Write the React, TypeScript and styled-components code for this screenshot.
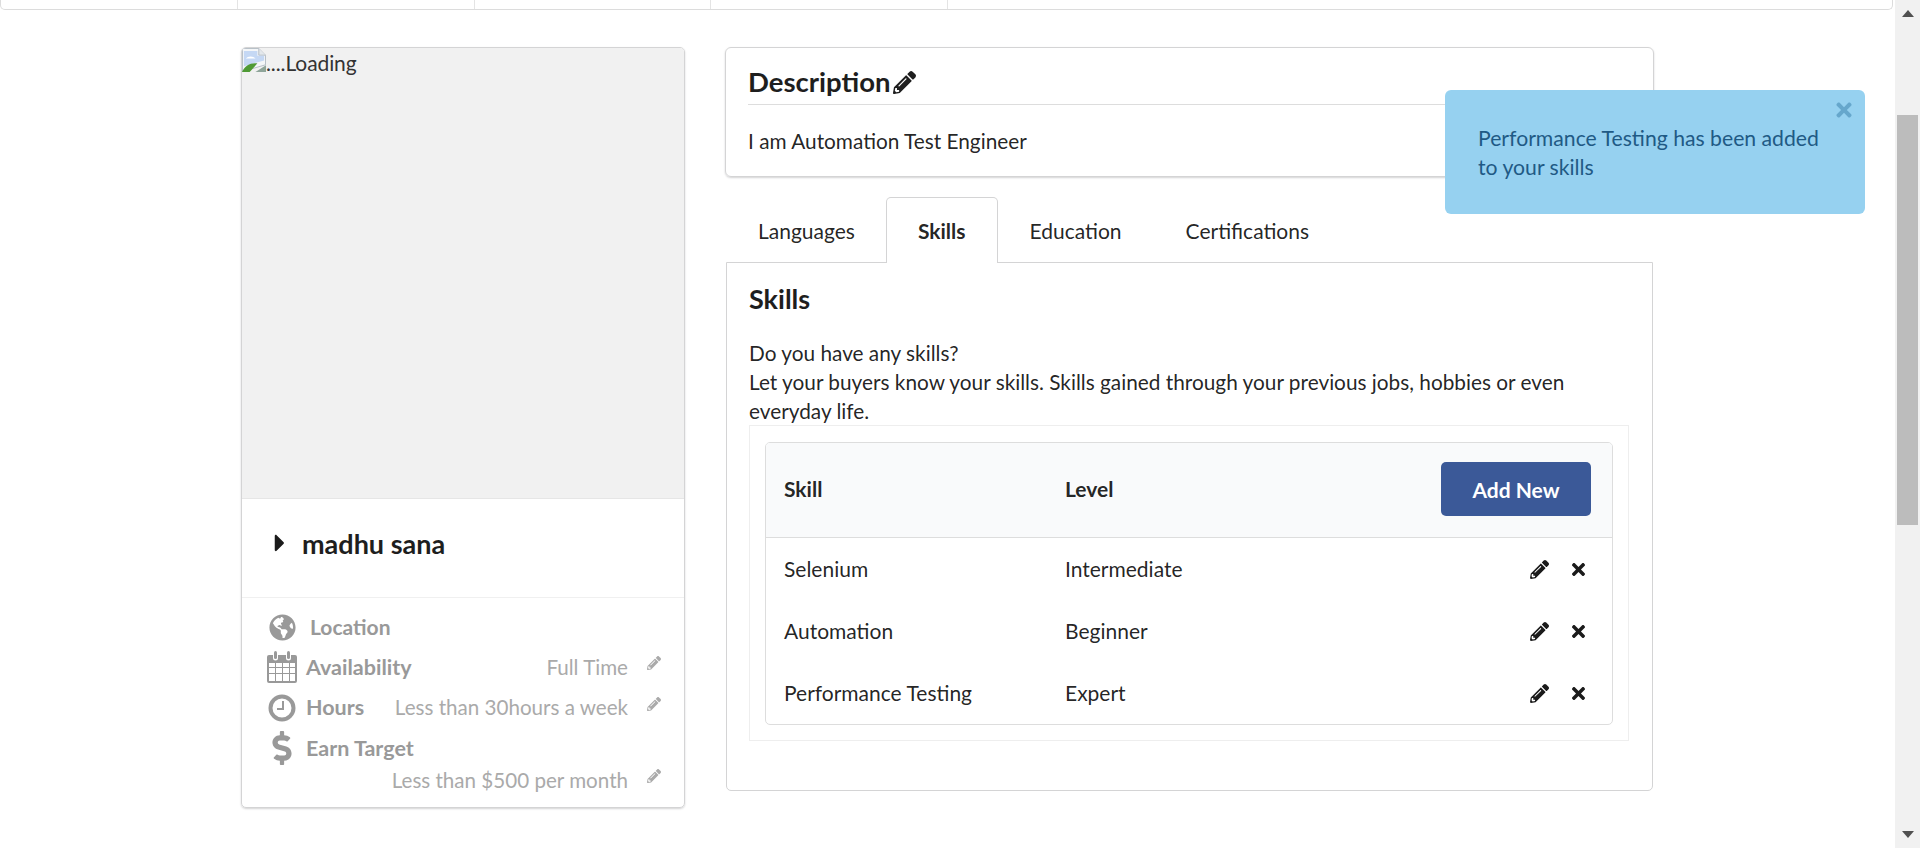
import React from "react";
import styled, { createGlobalStyle } from "styled-components";
import {
  FaCaretRight,
  FaDollarSign,
  FaGlobeAmericas,
  FaPencilAlt,
  FaTimes,
} from "react-icons/fa";

const GlobalStyle = createGlobalStyle`
  html, body {
    margin: 0;
    padding: 0;
    height: 100%;
    overflow: hidden;
    background: #fff;
  }
  * { box-sizing: border-box; }
  body {
    font-family: Lato, "Helvetica Neue", Arial, sans-serif;
    font-size: 21px;
    line-height: 28.57px;
    color: rgba(0, 0, 0, 0.87);
  }
`;

const skills = [
  { name: "Selenium", level: "Intermediate" },
  { name: "Automation", level: "Beginner" },
  { name: "Performance Testing", level: "Expert" },
];

const details = [
  { label: "Availability", value: "Full Time", icon: <CalendarIcon /> },
  { label: "Hours", value: "Less than 30hours a week", icon: <ClockIcon /> },
];

function CalendarIcon() {
  return (
    <svg viewBox="0 0 30 32" width="30" height="32" fill="currentColor">
      <path d="M2 4h4v3a2.500 2.500 0 0 0 5 0V4h8v3a2.500 2.500 0 0 0 5 0V4h4a2 2 0 0 1 2 2v24a2 2 0 0 1-2 2H2a2 2 0 0 1-2-2V6a2 2 0 0 1 2-2z" />
      <rect x="7" y="0" width="3" height="8" rx="1.500" />
      <rect x="20" y="0" width="3" height="8" rx="1.500" />
      <path
        fill="#fff"
        d="M2 12h6v4H2zM9 12h6v4H9zM16 12h6v4h-6zM23 12h5v4h-5zM2 17h6v5H2zM9 17h6v5H9zM16 17h6v5h-6zM23 17h5v5h-5zM2 23h6v7H2zM9 23h6v7H9zM16 23h6v7h-6zM23 23h5v7h-5z"
      />
    </svg>
  );
}

function ClockIcon() {
  return (
    <svg viewBox="0 0 28 28" width="28" height="28" fill="none" stroke="currentColor">
      <circle cx="14" cy="14" r="11.500" strokeWidth="4" />
      <path d="M15 7v8H9" strokeWidth="2" />
    </svg>
  );
}

function BrokenImage() {
  return (
    <svg viewBox="0 0 25 25" width="24" height="24">
      <path d="M.5.500h17l7 7v10l-24 7z" fill="#f4f6f8" stroke="#b4bcc4" />
      <path d="M17.500.500v7h7" fill="#e4e8ec" stroke="#b4bcc4" />
      <path d="M2 3h14v5h7v5L2 19z" fill="#c5d8f4" />
      <path d="M4 11c2-3 8-3 10 0z" fill="#fff" />
      <path d="M0 25c3-7 9-10 16-9L8 25z" fill="#4f9a35" />
      <path d="M14 25l11-7v7z" fill="#8fa59a" />
    </svg>
  );
}

function App() {
  return (
    <>
      <GlobalStyle />
      <Screen>
        <Page>
          <TopMenu>
            <MenuCell />
            <MenuCell />
            <MenuCell />
            <MenuCell />
          </TopMenu>
          <Columns>
            <ProfileCard>
              <Photo>
                <BrokenImage />
                <PhotoAlt>....Loading</PhotoAlt>
              </Photo>
              <NameBlock>
                <Caret>
                  <FaCaretRight />
                </Caret>
                <Name>madhu sana</Name>
              </NameBlock>
              <DetailList>
                <LocationRow>
                  <DetailIcon>
                    <FaGlobeAmericas />
                  </DetailIcon>
                  <LocationLabel>Location</LocationLabel>
                </LocationRow>
                {details.map((item) => (
                  <DetailRow key={item.label}>
                    <DetailIcon>{item.icon}</DetailIcon>
                    <DetailLabel>{item.label}</DetailLabel>
                    <DetailValue>{item.value}</DetailValue>
                    <SmallPencil>
                      <FaPencilAlt />
                    </SmallPencil>
                  </DetailRow>
                ))}
                <DetailRow>
                  <DollarIcon>
                    <FaDollarSign />
                  </DollarIcon>
                  <DetailLabel>Earn Target</DetailLabel>
                </DetailRow>
                <ValueOnlyRow>
                  <DetailValue>Less than $500 per month</DetailValue>
                  <SmallPencil>
                    <FaPencilAlt />
                  </SmallPencil>
                </ValueOnlyRow>
              </DetailList>
            </ProfileCard>
            <MainColumn>
              <DescriptionCard>
                <DescriptionTitle>
                  Description
                  <FaPencilAlt />
                </DescriptionTitle>
                <DescriptionText>I am Automation Test Engineer</DescriptionText>
              </DescriptionCard>
              <Tabs>
                <Tab>Languages</Tab>
                <Tab $active>Skills</Tab>
                <Tab>Education</Tab>
                <Tab>Certifications</Tab>
              </Tabs>
              <TabPanel>
                <PanelTitle>Skills</PanelTitle>
                <PanelText>
                  Do you have any skills?
                  <br />
                  Let your buyers know your skills. Skills gained through your
                  previous jobs, hobbies or even everyday life.
                </PanelText>
                <TableFrame>
                  <SkillTable>
                    <HeadRow>
                      <SkillCell>Skill</SkillCell>
                      <LevelCell>Level</LevelCell>
                      <AddButton>Add New</AddButton>
                    </HeadRow>
                    {skills.map((skill) => (
                      <BodyRow key={skill.name}>
                        <SkillCell>{skill.name}</SkillCell>
                        <LevelCell>{skill.level}</LevelCell>
                        <RowActions>
                          <FaPencilAlt />
                          <FaTimes />
                        </RowActions>
                      </BodyRow>
                    ))}
                  </SkillTable>
                </TableFrame>
              </TabPanel>
            </MainColumn>
          </Columns>
        </Page>
        <Scrollbar>
          <ArrowButton>
            <svg viewBox="0 0 12 7" width="12" height="7">
              <path d="M6 0l6 7H0z" fill="#505050" />
            </svg>
          </ArrowButton>
          <Thumb />
          <DownArrow>
            <svg viewBox="0 0 12 7" width="12" height="7">
              <path d="M6 7l6-7H0z" fill="#505050" />
            </svg>
          </DownArrow>
        </Scrollbar>
        <Toast>
          <ToastClose>
            <FaTimes />
          </ToastClose>
          Performance Testing has been added to your skills
        </Toast>
      </Screen>
    </>
  );
}

const Screen = styled.div`
  display: flex;
  height: 848px;
  overflow: hidden;
`;

const Page = styled.main`
  flex: 1;
  min-width: 0;
`;

const TopMenu = styled.div`
  display: flex;
  height: 10px;
  margin-right: 2px;
  border: 1px solid #dcdcdc;
  border-top: 0;
  border-radius: 0 0 5px 5px;
  padding-left: 236px;
`;

const MenuCell = styled.div`
  width: 236.500px;
  border-left: 1px solid #e4e4e4;
`;

const Columns = styled.div`
  display: flex;
  align-items: flex-start;
  gap: 40px;
  padding: 37px 0 0 241px;
`;

const ProfileCard = styled.section`
  width: 444px;
  height: 761px;
  border: 1px solid #d4d4d5;
  border-radius: 5px;
  box-shadow: 0 1px 2px rgba(34, 36, 38, 0.2);
  overflow: hidden;
`;

const Photo = styled.div`
  display: flex;
  align-items: flex-start;
  height: 451px;
  background: #f1f1f1;
  border-bottom: 1px solid #e6e6e6;
  line-height: 30px;
  color: #333;
`;

const PhotoAlt = styled.span`
  letter-spacing: -0.100px;
`;

const NameBlock = styled.div`
  display: flex;
  align-items: center;
  height: 99px;
  padding: 0 0 7px 24px;
  border-bottom: 1px solid #f0f0f0;
`;

const Caret = styled.span`
  display: flex;
  width: 36px;
  font-size: 28px;
  margin-top: -3px;
  color: #1b1b1b;
`;

const Name = styled.span`
  font-size: 27px;
  font-weight: 700;
  color: #1e1e1e;
`;

const DetailList = styled.div`
  padding: 10px 23px 0 25px;
  color: #999;
`;

const DetailRow = styled.div`
  display: flex;
  align-items: center;
  height: 40.500px;
`;

const LocationRow = styled(DetailRow)`
  height: 39px;
`;

const ValueOnlyRow = styled(DetailRow)`
  height: 23px;
  justify-content: flex-end;
`;

const DetailIcon = styled.span`
  display: flex;
  justify-content: center;
  width: 30px;
  font-size: 27px;
  color: #999;
`;

const DollarIcon = styled(DetailIcon)`
  font-size: 34px;
`;

const DetailLabel = styled.span`
  margin-left: 9px;
  font-size: 21.500px;
  font-weight: 700;
  white-space: nowrap;
`;

const LocationLabel = styled(DetailLabel)`
  margin-left: 13px;
  font-size: 21px;
`;

const DetailValue = styled.span`
  margin-left: auto;
  font-size: 20.600px;
  color: #aaa;
  white-space: nowrap;
`;

const SmallPencil = styled.span`
  display: flex;
  width: 33px;
  justify-content: flex-end;
  margin-top: -8px;
  font-size: 14px;
  color: #aaa;
`;

const MainColumn = styled.div`
  width: 929px;
`;

const DescriptionCard = styled.section`
  height: 130px;
  padding: 14px 22px;
  border: 1px solid #d4d4d5;
  border-radius: 6px;
  box-shadow: 0 1px 2px rgba(34, 36, 38, 0.2);
`;

const DescriptionTitle = styled.h3`
  display: flex;
  align-items: center;
  gap: 3px;
  height: 43px;
  margin: 0;
  padding-bottom: 2px;
  font-size: 27.500px;
  font-weight: 700;
  color: #1e1e1e;
  border-bottom: 1px solid #ddd;

  svg {
    font-size: 23px;
  }
`;

const DescriptionText = styled.p`
  margin: 22px 0 0;
  font-size: 20.800px;
`;

const Tabs = styled.nav`
  display: flex;
  height: 65px;
  margin-top: 20px;
  padding-left: 1px;
`;

const Tab = styled.div<{ $active?: boolean }>`
  display: flex;
  align-items: center;
  padding: 2px 31px 0;
  margin-left: ${(p) => (p.$active ? "-1px" : "0")};
  margin-bottom: ${(p) => (p.$active ? "-1px" : "0")};
  font-weight: ${(p) => (p.$active ? 700 : 400)};
  background: #fff;
  position: relative;
  border: 1px solid ${(p) => (p.$active ? "#d4d4d5" : "transparent")};
  border-bottom: 0;
  border-radius: 5px 5px 0 0;
  z-index: 1;
`;

const TabPanel = styled.section`
  height: 529px;
  margin: 0 1px;
  padding: 18px 23px 0 22px;
  border: 1px solid #d4d4d5;
  border-radius: 0 0 5px 5px;
`;

const PanelTitle = styled.h3`
  margin: 0;
  font-size: 27px;
  font-weight: 700;
  line-height: 36px;
  color: #1e1e1e;
`;

const PanelText = styled.p`
  margin: 21px 0 0;
  font-size: 20.800px;
  line-height: 29px;
`;

const TableFrame = styled.div`
  height: 316px;
  padding: 16px 15px;
  border: 1px solid #eee;
  background: #fff;
`;

const SkillTable = styled.div`
  height: 283px;
  border: 1px solid #ddd;
  border-radius: 5px;
  overflow: hidden;
`;

const HeadRow = styled.div`
  display: flex;
  align-items: center;
  height: 95px;
  padding: 0 21px 2px 18px;
  font-weight: 700;
  background: #f9fafb;
  border-bottom: 1px solid #ddd;
`;

const BodyRow = styled.div`
  display: flex;
  align-items: center;
  height: 62px;
  padding: 0 21px 0 18px;
`;

const SkillCell = styled.div`
  width: 281px;
`;

const LevelCell = styled.div`
  flex: 1;
`;

const AddButton = styled.button`
  width: 150px;
  height: 54px;
  border: 0;
  border-radius: 5px;
  background: #3b5998;
  color: #fff;
  font: 700 21px Lato, sans-serif;
`;

const RowActions = styled.div`
  display: flex;
  align-items: center;
  gap: 20px;
  padding-right: 3px;
  font-size: 19px;
  color: #1b1b1b;
`;

const Scrollbar = styled.aside`
  width: 25px;
  display: flex;
  flex-direction: column;
  align-items: center;
  background: #f1f1f1;
`;

const ArrowButton = styled.div`
  display: flex;
  justify-content: center;
  padding-top: 10px;
  height: 115px;
`;

const DownArrow = styled.div`
  display: flex;
  margin-top: auto;
  padding-bottom: 10px;
`;

const Thumb = styled.div`
  width: 21px;
  height: 410px;
  background: #bcbcbc;
`;

const Toast = styled.div`
  position: fixed;
  top: 90px;
  left: 1445px;
  width: 420px;
  height: 124px;
  padding: 34px 40px 0 33px;
  background: #96d1f0;
  border-radius: 6px;
  font-size: 21.200px;
  color: #1f5a85;
  z-index: 10;
`;

const ToastClose = styled.span`
  position: absolute;
  top: 9px;
  right: 10px;
  font-size: 22px;
  color: #66a7cc;
`;

export default App;
